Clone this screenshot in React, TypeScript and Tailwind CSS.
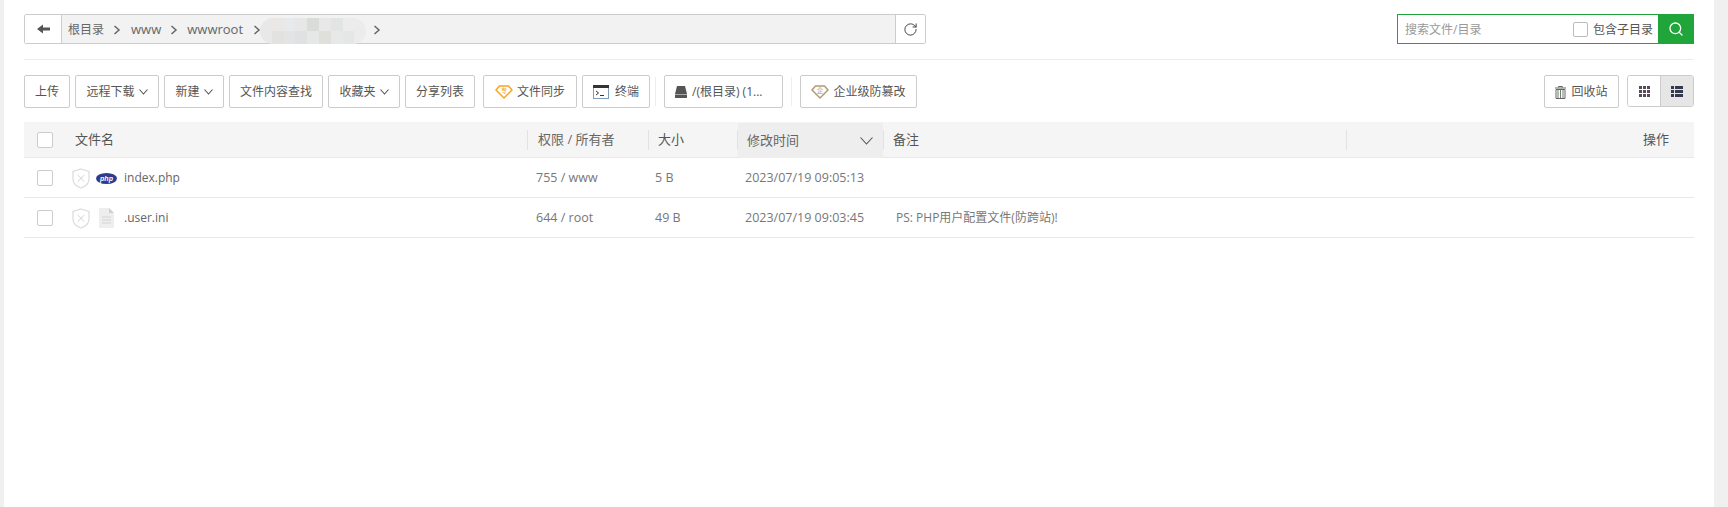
import { RotateCw, Search } from "lucide-react";

const FONT = "[font-family:'Open_Sans','Noto_Sans_CJK_SC',sans-serif]";

const Crumb = () => (
  <svg width="8" height="10" viewBox="0 0 8 10" className="shrink-0">
    <path d="M1.5 1 L6 5 L1.5 9" fill="none" stroke="#666" strokeWidth="1.5" />
  </svg>
);

function Btn({ children, w, className = "" }: { children: React.ReactNode; w: string; className?: string }) {
  return (
    <div className={`h-[33px] pt-px shrink-0 flex items-center justify-center gap-[4px] border border-[#ccc] rounded-[2px] bg-white text-[12px] text-[#555] ${w} ${className}`}>
      {children}
    </div>
  );
}

const Chev = ({ w = 9, h = 5 }: { w?: number; h?: number }) => (
  <svg width={w} height={h + 1} viewBox={`0 0 ${w} ${h + 1}`} className="shrink-0">
    <path d={`M0.5 0.5 L${w / 2} ${h} L${w - 0.5} 0.5`} fill="none" stroke="#555" strokeWidth="1.1" />
  </svg>
);

function Diamond({ color, ch }: { color: string; ch: string }) {
  return (
    <svg width="18" height="14" viewBox="0 0 18 14" className="shrink-0">
      <path d="M4.5 1 H13.5 L17 5 L9 13 L1 5 Z" fill="none" stroke={color} strokeWidth="1.5" strokeLinejoin="round" />
      <text x="9" y="8" fontSize="6.5" textAnchor="middle" fill={color}>{ch}</text>
    </svg>
  );
}

const Shield = () => (
  <svg width="18" height="21" viewBox="0 0 18 21" className="shrink-0">
    <path d="M9 1 L17 3.5 V11 C17 15.5 13 18.5 9 20 C5 18.5 1 15.5 1 11 V3.5 Z" fill="none" stroke="#ddd" strokeWidth="1.3" />
    <path d="M5.7 7 L12.3 13.6 M12.3 7 L5.7 13.6" stroke="#ccc" strokeWidth="0.9" />
  </svg>
);

const PhpIcon = () => (
  <svg width="21" height="11" viewBox="0 0 21 11" className="shrink-0">
    <ellipse cx="10.5" cy="5.5" rx="10.5" ry="5.5" fill="#2f3b8f" />
    <text x="10.5" y="7.8" fontSize="7" fontWeight="700" textAnchor="middle" fill="#fff" fontFamily="Liberation Sans" fontStyle="italic">php</text>
  </svg>
);

const FileIcon = () => (
  <svg width="15" height="20" viewBox="0 0 15 20" className="shrink-0">
    <path d="M0 0 H10 L15 5 V20 H0 Z" fill="#eeeeee" />
    <path d="M10 0 L15 5 H10 Z" fill="#cfcfcf" />
    <path d="M3 9 H12 M3 12 H12 M3 15 H12" stroke="#d4d4d4" strokeWidth="1" />
  </svg>
);

const TrashIcon = () => (
  <svg width="11" height="13" viewBox="0 0 11 13" className="shrink-0">
    <path d="M3.5 1.5 V0.5 H7.5 V1.5 M0 2 H11" fill="none" stroke="#666" strokeWidth="1" />
    <path d="M1 3.5 H10 V12.5 H1 Z" fill="none" stroke="#666" strokeWidth="1" />
    <path d="M3 4 V12 M5.5 4 V12 M8 4 V12" stroke="#6f7f6a" strokeWidth="1" />
  </svg>
);

const Check = () => <div className="w-[16px] h-[16px] border border-[#ccc] rounded-[2px] bg-white shrink-0" />;

const Sep = () => <div className="w-px h-[29px] bg-[#eee] shrink-0" />;
const HSep = () => <div className="w-px h-[20px] bg-[#e2e2e2] shrink-0" />;

const cells = [
  "bg-[#e8e8e8]", "bg-[#e9e8e6]", "bg-[#e8e9ea]", "bg-[#e7e7e7]", "bg-[#dadcda]", "bg-[#e8e8e8]", "bg-[#e3e4e4]", "bg-[#ececec]", "bg-[#ececec]",
  "bg-[#e8e8e8]", "bg-[#e2e3e1]", "bg-[#e3e5e4]", "bg-[#dfe1e3]", "bg-[#e6e8e8]", "bg-[#dfdfdc]", "bg-[#e8e8e8]", "bg-[#e5e6e6]", "bg-[#ececec]",
];

function Row({ name, icon, perm, size, date, note }: { name: string; icon: React.ReactNode; perm: string; size: string; date: string; note?: string }) {
  return (
    <div className="h-[40px] pt-px flex items-center border-b border-[#e8e8e8] text-[12.5px] text-[#777]">
      <div className="w-[48px] pl-[13px] shrink-0"><Check /></div>
      <div className="w-[22px] shrink-0"><Shield /></div>
      <div className="w-[27px] shrink-0 flex justify-center pr-[2px]">{icon}</div>
      <div className="w-[415px] shrink-0 pl-[3px] text-[12px] text-[#666]">{name}</div>
      <div className="w-[119px] shrink-0">{perm}</div>
      <div className="w-[90px] shrink-0">{size}</div>
      <div className="w-[151px] shrink-0">{date}</div>
      <div className="text-[12px]">{note}</div>
    </div>
  );
}

export default function App() {
  return (
    <div className={`h-[507px] bg-white flex overflow-hidden ${FONT}`}>
      <div className="w-[4px] bg-[#f0f0f0] shrink-0" />
      <div className="w-[1710px] shrink-0 pl-[20px] pr-[20px] pt-[14px]">
        <div className="flex justify-between h-[30px]">
          <div className="w-[902px] flex border border-[#ccc] rounded-[2px] bg-[#f2f2f2]">
            <div className="w-[37px] bg-white border-r border-[#ccc] flex items-center justify-center shrink-0">
              <svg width="13" height="10" viewBox="0 0 13 10">
                <path d="M0 5 L6 0.5 V3.5 H13 V6.5 H6 V9.5 Z" fill="#555" />
              </svg>
            </div>
            <div className="flex-1 flex items-center pl-[6px] pt-px text-[13px] text-[#666]">
              <span className="text-[12px]">根目录</span>
              <span className="ml-[9px] mr-[10px]"><Crumb /></span>
              <span>www</span>
              <span className="ml-[9px] mr-[9px]"><Crumb /></span>
              <span>wwwroot</span>
              <span className="ml-[10px]"><Crumb /></span>
              <div className="-ml-[1px] w-[106px] h-[26px] mt-[3px] rounded-[13px] overflow-hidden grid grid-cols-9 grid-rows-2 shrink-0">
                {cells.map((c, i) => <div key={i} className={c} />)}
              </div>
              <span className="ml-[7px]"><Crumb /></span>
            </div>
            <div className="w-[30px] bg-white border-l border-[#ccc] flex items-center justify-center shrink-0">
              <RotateCw size={15} strokeWidth={1.6} color="#444" />
            </div>
          </div>
          <div className="w-[297px] flex border border-[#20a53a] bg-white">
            <div className="flex-1 flex items-center pl-[7px] pt-px text-[12px] text-[#999]">搜索文件/目录</div>
            <div className="flex items-center gap-[5px] pr-[5px] pt-px text-[12px] text-[#555]">
              <div className="w-[15px] h-[15px] border border-[#bbb] rounded-[2px]" />
              <span>包含子目录</span>
            </div>
            <div className="w-[36px] -my-px -mr-px bg-[#20a53a] flex items-center justify-center">
              <Search size={16} strokeWidth={2} color="#fff" />
            </div>
          </div>
        </div>

        <div className="h-px bg-[#ececec] mt-[15px] mb-[15px]" />

        <div className="flex items-center h-[33px]">
          <Btn w="w-[46px]">上传</Btn>
          <Btn w="w-[84px]" className="ml-[5px]">远程下载<Chev /></Btn>
          <Btn w="w-[60px]" className="ml-[5px]">新建<Chev /></Btn>
          <Btn w="w-[94px]" className="ml-[5px]">文件内容查找</Btn>
          <Btn w="w-[72px]" className="ml-[5px]">收藏夹<Chev /></Btn>
          <Btn w="w-[70px]" className="ml-[5px]">分享列表</Btn>
          <Btn w="w-[94px]" className="ml-[8px]"><Diamond color="#f5a623" ch="专" />文件同步</Btn>
          <Btn w="w-[68px]" className="ml-[5px] !gap-[6px]">
            <svg width="16" height="14" viewBox="0 0 16 14" className="shrink-0">
              <rect x="0.5" y="0.5" width="15" height="13" fill="#fff" stroke="#7d9cc0" />
              <rect x="0" y="0" width="16" height="3" fill="#333" />
              <path d="M3 6 L5.5 8 L3 10 M7 10.5 H11" fill="none" stroke="#333" strokeWidth="1" />
            </svg>
            终端
          </Btn>
          <div className="ml-[5px] mr-[8px]"><Sep /></div>
          <Btn w="w-[119px]" className="!gap-[5px] !justify-start pl-[10px]">
            <svg width="12" height="12" viewBox="0 0 12 12" className="shrink-0">
              <path d="M2 0 H10 L12 8 H0 Z" fill="#555" />
              <rect x="0" y="8.5" width="12" height="3.5" rx="0.5" fill="#555" />
            </svg>
            /(根目录) (1...
          </Btn>
          <div className="ml-[8px] mr-[8px]"><Sep /></div>
          <Btn w="w-[117px]"><Diamond color="#b39a76" ch="企" />企业级防篡改</Btn>
          <div className="flex-1" />
          <Btn w="w-[75px]" className="!gap-[5px]">
            <TrashIcon />
            回收站
          </Btn>
          <div className="ml-[8px] w-[67px] h-[32px] flex border border-[#ccc] rounded-[3px] overflow-hidden self-start">
            <div className="flex-1 bg-white flex items-center justify-center">
              <div className="grid grid-cols-3 gap-px w-[11px]">
                {Array.from({ length: 9 }).map((_, i) => <div key={i} className="w-[3px] h-[3px] bg-[#5a4a5a]" />)}
              </div>
            </div>
            <div className="flex-1 bg-[#e6e6e6] border-l border-[#ccc] flex items-center justify-center">
              <svg width="12" height="11" viewBox="0 0 12 11">
                <path d="M0 0 H3 V3 H0 Z M4 0 H12 V3 H4 Z M0 4 H3 V7 H0 Z M4 4 H12 V7 H4 Z M0 8 H3 V11 H0 Z M4 8 H12 V11 H4 Z" fill="#333a4d" />
              </svg>
            </div>
          </div>
        </div>

        <div className="mt-[14px] h-[36px] flex items-center bg-[#f5f5f5] border-b border-[#e8e8e8] text-[13px] text-[#666]">
          <div className="w-[51px] pl-[13px] shrink-0"><Check /></div>
          <div className="w-[452px] shrink-0 pt-px text-[#555]">文件名</div>
          <HSep />
          <div className="w-[120px] shrink-0 pl-[10px] pt-px">权限 / 所有者</div>
          <HSep />
          <div className="w-[88px] shrink-0 pl-[9px] pt-px text-[#555]">大小</div>
          <HSep />
          <div className="w-[145px] h-full -mb-px shrink-0 bg-[#eeeeee] flex items-center justify-between pl-[9px] pr-[10px] pt-px">
            <span>修改时间</span>
            <Chev w={13} h={7} />
          </div>
          <HSep />
          <div className="w-[462px] shrink-0 pl-[9px] pt-px text-[#555]">备注</div>
          <HSep />
          <div className="flex-1 text-right pr-[25px] pt-px text-[#555]">操作</div>
        </div>

        <Row name="index.php" icon={<PhpIcon />} perm="755 / www" size="5 B" date="2023/07/19 09:05:13" />
        <Row name=".user.ini" icon={<FileIcon />} perm="644 / root" size="49 B" date="2023/07/19 09:03:45" note="PS: PHP用户配置文件(防跨站)!" />
      </div>
      <div className="flex-1 bg-[#f0f0f0]" />
    </div>
  );
}
